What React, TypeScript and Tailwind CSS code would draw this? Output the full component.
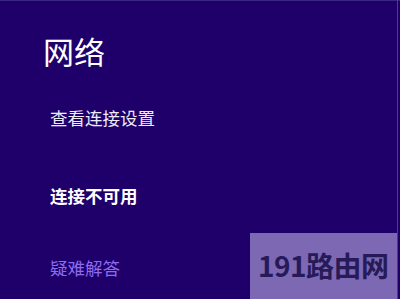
export default function App() {
  const cjk = { fontFamily: '"Microsoft YaHei", "Noto Sans CJK SC", sans-serif' };

  return (
    <div className="relative w-[400px] h-[299px] overflow-hidden bg-[#1f006b]" style={cjk}>
      {/* Flyout panel */}
      <div className="flex flex-col pl-[50px] pt-[29px] border-t border-[#3a2585]">
        <h1 className="-ml-[7px] text-[31px] leading-[42px] text-white font-normal">网络</h1>
        <a className="mt-[34px] text-[17.5px] leading-[24px] text-[#eeeaf6]">查看连接设置</a>
        <p className="mt-[54px] text-[17.5px] leading-[24px] font-bold text-white">连接不可用</p>
        <a className="mt-[48px] text-[17.5px] leading-[24px] text-[#8b6cf2]">疑难解答</a>
      </div>

      {/* right edge of the screen capture */}
      <div className="absolute top-0 right-[2px] w-px h-full bg-[#4b3a9a]" />

      {/* watermark */}
      <div className="absolute left-[250px] top-[233px] w-[147px] h-[66px] bg-[#7c68b3] flex items-center pl-[8px] pb-[2px]">
        <span className="text-[28px] font-bold text-[#261a58] tracking-[-0.5px]">
          <span className="font-semibold">191</span>路由网
        </span>
      </div>
    </div>
  );
}
